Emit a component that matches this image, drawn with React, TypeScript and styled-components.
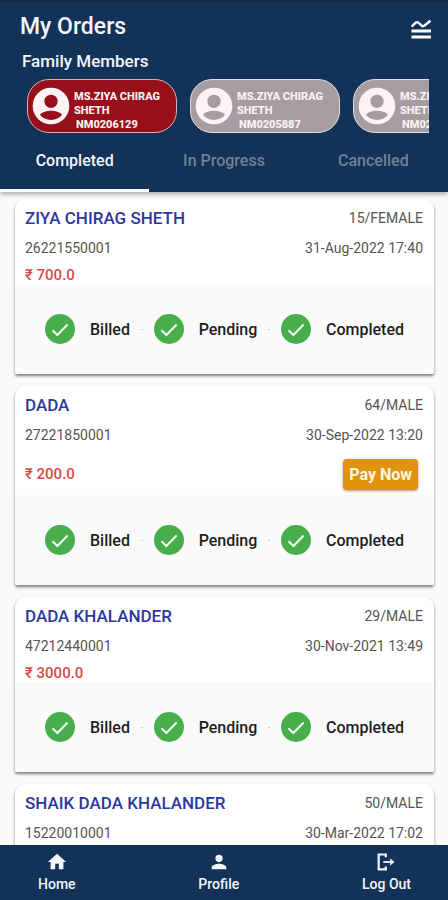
import React, { useState } from "react";
import styled, { createGlobalStyle } from "styled-components";

const NAVY = "#123357";

const GlobalStyle = createGlobalStyle`
  * { box-sizing: border-box; }
  body {
    margin: 0;
    background: #fafafa;
    font-family: Roboto, "Noto Sans", sans-serif;
  }
  button { font-family: inherit; border: 0; padding: 0; background: none; cursor: pointer; }
  h1, h2, h3, p, ul, ol { margin: 0; padding: 0; font-weight: inherit; }
  li { list-style: none; }
`;

const Screen = styled.div`
  height: 100vh;
  display: flex;
  flex-direction: column;
  overflow: hidden;
`;

const Header = styled.header`
  flex: none;
  display: flex;
  flex-direction: column;
  background: ${NAVY};
  color: #f3f6fa;
  border-top: 2px solid #0f2d49;
  box-shadow: 0 2px 5px rgba(0, 0, 0, 0.35);
  z-index: 1;
`;

const TitleRow = styled.div`
  display: flex;
  align-items: center;
  justify-content: space-between;
  padding: 9px 15px 0 20px;
`;

const Title = styled.h1`
  font-size: 23px;
  font-weight: 500;
  line-height: 32px;
`;

const IconButton = styled.button`
  display: flex;
  padding-top: 6px;
  color: #fff;
`;

const SectionTitle = styled.h2`
  padding: 5px 22px;
  font-size: 17px;
  font-weight: 500;
  line-height: 26px;
`;

const MemberList = styled.ul`
  display: flex;
  gap: 13px;
  margin: 0 19px 0 27px;
  overflow-x: auto;
  scrollbar-width: none;
`;

const MemberChip = styled.button<{ $selected: boolean }>`
  display: flex;
  align-items: center;
  gap: 3px;
  width: 150px;
  height: 54px;
  padding: 0 4px 0 3px;
  border: 1px solid ${(p) => (p.$selected ? "#dcaeb8" : "#dfdde3")};
  border-radius: 22px;
  background: ${(p) => (p.$selected ? "#960f19" : "#a69da3")};
  color: #fbf3f4;
  text-align: left;
`;

const MemberText = styled.span`
  flex: 1;
  padding-top: 9px;
  font-size: 11px;
  font-weight: 800;
  line-height: 14px;
`;

const MemberId = styled.span`
  display: block;
  padding-left: 2px;
`;

const Tabs = styled.div`
  display: grid;
  grid-template-columns: repeat(3, 1fr);
`;

const Tab = styled.button<{ $active: boolean }>`
  height: 59px;
  border-bottom: 3px solid ${(p) => (p.$active ? "#fff" : "transparent")};
  color: ${(p) => (p.$active ? "#f3f6fa" : "#718196")};
  font-size: 16px;
  font-weight: 500;
  line-height: 24px;
`;

const OrderList = styled.main`
  flex: 1;
  min-height: 0;
  display: flex;
  flex-direction: column;
  gap: 12px;
  padding: 7px 14px 12px 15px;
  overflow-y: auto;
  scrollbar-width: none;
`;

const Card = styled.article`
  flex: none;
  border-radius: 10px 10px 2px 2px;
  background: #fff;
  box-shadow: 0 2px 3px rgba(0, 0, 0, 0.5);
`;

const Details = styled.div`
  display: flex;
  flex-direction: column;
  padding: 8px 11px 0 10px;
`;

const DetailRow = styled.div`
  display: flex;
  align-items: center;
  justify-content: space-between;
  margin-bottom: 10px;
`;

const PatientName = styled.h3`
  color: #2c38a0;
  font-size: 17px;
  font-weight: 500;
  line-height: 22px;
`;

const Meta = styled.span`
  color: #555;
  font-size: 14px;
  line-height: 18px;
`;

const PriceRow = styled.div<{ $tall: boolean }>`
  display: flex;
  align-items: center;
  justify-content: space-between;
  height: ${(p) => (p.$tall ? 42 : 18)}px;
  margin-top: -1px;
  padding-right: 5px;
`;

const Price = styled.p`
  color: #dd4a44;
  font-size: 15px;
  font-weight: 500;
  line-height: 18px;
`;

const PayButton = styled.button`
  height: 31px;
  padding: 0 6px;
  border-radius: 4px;
  background: #e0930f;
  box-shadow: 0 1px 3px rgba(0, 0, 0, 0.4);
  color: #fff6e2;
  font-size: 16px;
  font-weight: 700;
`;

const Stepper = styled.ol`
  display: flex;
  align-items: center;
  height: 90px;
  padding: 0 30px;
  border-radius: 0 0 2px 2px;
  background: #fafafa;
`;

const Step = styled.li`
  display: flex;
  align-items: center;
  gap: 15px;
  color: #1d1d1d;
  font-size: 16px;
  font-weight: 500;
`;

const Connector = styled.li`
  flex: 1;
  height: 1px;
  margin: 0 11px;
  background: #cfcfcf;
`;

const BottomNav = styled.nav`
  flex: none;
  display: flex;
  justify-content: space-between;
  height: 55px;
  padding: 6px 37px 0 38px;
  background: ${NAVY};
`;

const NavLink = styled.a`
  display: flex;
  flex-direction: column;
  align-items: center;
  gap: 1px;
  color: #f3f6fa;
  font-size: 14px;
  font-weight: 500;
  line-height: 20px;
  text-decoration: none;
`;

const MenuIcon = () => (
  <svg width="24" height="24" viewBox="0 0 24 24" fill="none" stroke="currentColor" aria-hidden="true">
    <path d="M2.6 8.6L6.7 4.7Q8 3.6 9.3 4.7L12.7 7.7Q14 8.8 15.3 7.7L21.4 2.8" strokeWidth="2.4" />
    <path d="M2.5 13H22M2.5 19H22" strokeWidth="2.8" />
  </svg>
);

const AvatarIcon = () => (
  <svg width="40" height="40" viewBox="0 0 24 24" fill="currentColor" aria-hidden="true">
    <path d="M12 1a11 11 0 1 0 0 22a11 11 0 0 0 0-22zm0 4.2a4 4 0 1 1 0 8a4 4 0 0 1 0-8zM12 20.4c-2.8 0-5.2-1.1-6.6-3.1c1.1-1.7 4.4-2.4 6.6-2.4s5.5.7 6.6 2.4c-1.4 2-3.8 3.1-6.6 3.1z" />
  </svg>
);

const CheckIcon = () => (
  <svg width="30" height="30" viewBox="0 0 30 30" aria-hidden="true">
    <circle cx="15" cy="15" r="15" fill="#48ae4c" />
    <path d="M7.5 16.2L12.4 21L22.6 10.5" fill="none" stroke="#f4fbf4" strokeWidth="2" />
  </svg>
);

const navIcons = {
  Home: (
    <svg width="22" height="22" viewBox="0 0 24 24" fill="currentColor" aria-hidden="true">
      <path d="M10 20v-6h4v6h5v-8h3L12 3L2 12h3v8z" />
    </svg>
  ),
  Profile: (
    <svg width="22" height="22" viewBox="0 0 24 24" fill="currentColor" aria-hidden="true">
      <path d="M12 12a4 4 0 1 0 0-8a4 4 0 0 0 0 8zm0 2c-2.7 0-8 1.3-8 4v2h16v-2c0-2.7-5.3-4-8-4z" />
    </svg>
  ),
  "Log Out": (
    <svg width="22" height="22" viewBox="0 0 24 24" fill="none" stroke="currentColor" strokeWidth="2.4" aria-hidden="true">
      <path d="M11.8 6.8V3.8H4V20H11.8V17" />
      <path d="M9 12H18" strokeWidth="2" />
      <path d="M16.5 8.3L21.3 12L16.5 15.7z" fill="currentColor" stroke="none" />
    </svg>
  ),
};

const members = [
  { name: "MS.ZIYA CHIRAG SHETH", id: "NM0206129" },
  { name: "MS.ZIYA CHIRAG SHETH", id: "NM0205887" },
  { name: "MS.ZIYA CHIRAG SHETH", id: "NM0205886" },
];

const tabs = ["Completed", "In Progress", "Cancelled"];

const steps = ["Billed", "Pending", "Completed"];

const orders = [
  { name: "ZIYA CHIRAG SHETH", person: "15/FEMALE", id: "26221550001", date: "31-Aug-2022 17:40", price: "700.0", due: false },
  { name: "DADA", person: "64/MALE", id: "27221850001", date: "30-Sep-2022 13:20", price: "200.0", due: true },
  { name: "DADA KHALANDER", person: "29/MALE", id: "47212440001", date: "30-Nov-2021 13:49", price: "3000.0", due: false },
  { name: "SHAIK DADA KHALANDER", person: "50/MALE", id: "15220010001", date: "30-Mar-2022 17:02", price: "500.0", due: false },
];

type Order = (typeof orders)[number];

const OrderCard = ({ order }: { order: Order }) => (
  <Card>
    <Details>
      <DetailRow>
        <PatientName>{order.name}</PatientName>
        <Meta>{order.person}</Meta>
      </DetailRow>
      <DetailRow>
        <Meta>{order.id}</Meta>
        <Meta>{order.date}</Meta>
      </DetailRow>
      <PriceRow $tall={order.due}>
        <Price>₹ {order.price}</Price>
        {order.due && <PayButton type="button">Pay Now</PayButton>}
      </PriceRow>
    </Details>
    <Stepper>
      {steps.map((step, i) => (
        <React.Fragment key={step}>
          {i > 0 && <Connector aria-hidden="true" />}
          <Step>
            <CheckIcon />
            {step}
          </Step>
        </React.Fragment>
      ))}
    </Stepper>
  </Card>
);

export default function App() {
  const [member, setMember] = useState(0);
  const [tab, setTab] = useState(0);

  return (
    <Screen>
      <GlobalStyle />
      <Header>
        <TitleRow>
          <Title>My Orders</Title>
          <IconButton type="button" aria-label="Menu">
            <MenuIcon />
          </IconButton>
        </TitleRow>
        <SectionTitle>Family Members</SectionTitle>
        <MemberList>
          {members.map((m, i) => (
            <li key={m.id}>
              <MemberChip type="button" $selected={i === member} onClick={() => setMember(i)}>
                <AvatarIcon />
                <MemberText>
                  {m.name}
                  <MemberId>{m.id}</MemberId>
                </MemberText>
              </MemberChip>
            </li>
          ))}
        </MemberList>
        <Tabs role="tablist">
          {tabs.map((label, i) => (
            <Tab key={label} type="button" role="tab" aria-selected={i === tab} $active={i === tab} onClick={() => setTab(i)}>
              {label}
            </Tab>
          ))}
        </Tabs>
      </Header>
      <OrderList>
        {orders.map((order) => (
          <OrderCard key={order.id} order={order} />
        ))}
      </OrderList>
      <BottomNav>
        {Object.entries(navIcons).map(([label, icon]) => (
          <NavLink key={label} href="#">
            {icon}
            {label}
          </NavLink>
        ))}
      </BottomNav>
    </Screen>
  );
}
